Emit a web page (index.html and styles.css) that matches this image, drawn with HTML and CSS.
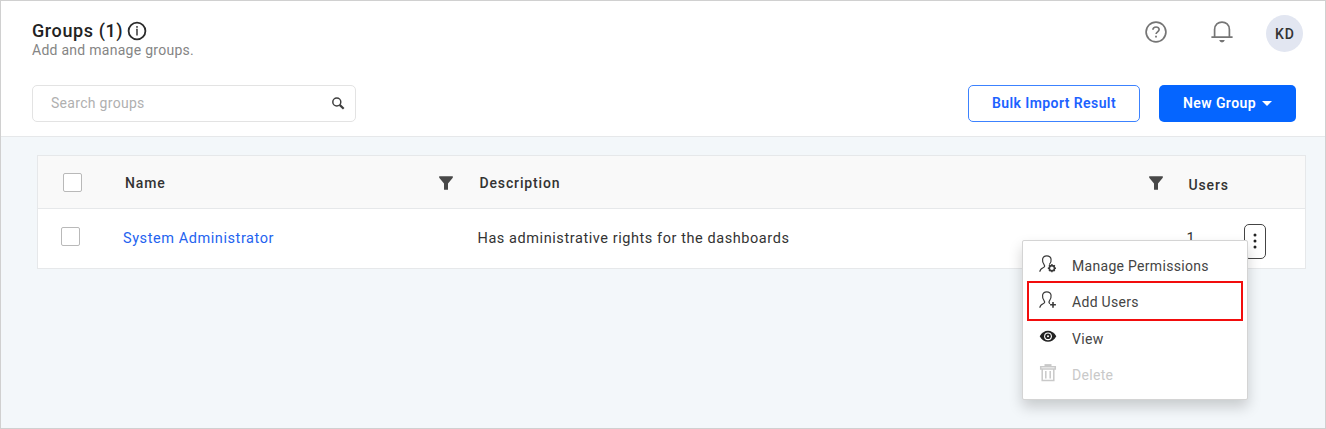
FILE: index.html
```html
<!DOCTYPE html>
<html lang="en">
<head>
<meta charset="utf-8">
<title>Groups</title>
<link rel="stylesheet" href="styles.css">
</head>
<body>
<div class="page">
  <header class="header">
    <div class="topbar">
      <div class="heading">
        <h1 class="title"><span class="title-text">Groups (1)</span>
          <svg class="info" width="20" height="20" viewBox="0 0 20 20"><circle cx="10" cy="10" r="8.4" fill="none" stroke="#2b2b2b" stroke-width="1.8"/><path d="M9.200 8.500H10v6" fill="none" stroke="#2b2b2b" stroke-width="1.400"/><circle cx="10" cy="5.900" r=".9" fill="#2b2b2b"/></svg>
        </h1>
        <p class="subtitle">Add and manage groups.</p>
      </div>
      <div class="tools">
        <svg class="help" width="22" height="22" viewBox="0 0 22 22" fill="none" stroke="#757575" stroke-width="1.700"><circle cx="11" cy="11" r="9.900"/><path d="M7.900 8.800c.2-3.800 6.300-3.600 6.200-.2 0 2.200-3 2.300-3 4.500"/><path d="M10.100 15.600h1.800" stroke-width="1.800"/></svg>
        <svg class="bell" width="22" height="22" viewBox="0 0 22 22" fill="none" stroke="#757575" stroke-width="1.700"><path d="M.4 16.100h21.200M3.600 16V8.600C3.600-1.400 18.400-1.400 18.400 8.600V16"/><path d="M8.200 19h5.600q-.6 2.400-2.800 2.400T8.200 19z" fill="#757575" stroke="none"/></svg>
        <span class="avatar">KD</span>
      </div>
    </div>
    <div class="actions">
      <label class="search"><input class="search-input" type="text" placeholder="Search groups">
        <svg width="14" height="14" viewBox="0 0 14 14" fill="none" stroke="#3f3f3f"><circle cx="5.800" cy="5" r="4" stroke-width="1.500"/><path d="M8.700 7.900l4 3.900" stroke-width="2.200"/></svg>
      </label>
      <div class="buttons">
        <button class="btn btn-outline">Bulk Import Result</button>
        <button class="btn btn-primary">New Group<span class="caret"></span></button>
      </div>
    </div>
  </header>
  <main class="content">
    <div class="table">
      <div class="row row-head">
        <span class="cell check"><span class="box"></span></span>
        <span class="cell name">Name</span>
        <span class="cell filter"><svg width="14" height="14" viewBox="0 0 14 14"><path d="M.2.300h13.600v1.500L9 7.600v6.100H5V7.600L.2 1.800z" fill="#484848"/></svg></span>
        <span class="cell desc">Description</span>
        <span class="cell filter"><svg width="14" height="14" viewBox="0 0 14 14"><path d="M.2.300h13.600v1.500L9 7.600v6.100H5V7.600L.2 1.800z" fill="#484848"/></svg></span>
        <span class="cell users">Users</span>
      </div>
      <div class="row row-body">
        <span class="cell check"><span class="box"></span></span>
        <a class="cell name">System Administrator</a>
        <span class="cell"></span>
        <span class="cell desc">Has administrative rights for the dashboards</span>
        <span class="cell"></span>
        <span class="cell users">1</span>
        <span class="cell more"><button class="more-btn"><svg width="4" height="16" viewBox="0 0 4 16" fill="#222"><circle cx="2" cy="2" r="1.500"/><circle cx="2" cy="8" r="1.500"/><circle cx="2" cy="14" r="1.500"/></svg></button></span>
      </div>
    </div>
  </main>
  <div class="menu">
    <div class="item item-first">
      <svg width="18" height="18" viewBox="0 0 18 18" fill="none" stroke="#3a3a3a" stroke-width="1.200"><path d="M.8 16.800c.3-2.400 1.400-3.400 3.300-4.100 1.600-.6 1.900-1.500 1.200-2.600C2.600 6.600 2.600.900 7.800.900s5.300 5.700 2.500 8.800"/><circle cx="12.900" cy="13.200" r="2.600" stroke-width="1.600"/><path d="M12.900 9.100v1.500M12.900 15.800v1.500M8.800 13.200h1.500M15.500 13.200H17M10 10.300l1 1M14.800 15.100l1 1M10 16.100l1-1M14.800 11.300l1-1" stroke-width="1.400"/></svg>
      <span>Manage Permissions</span>
    </div>
    <div class="item item-active">
      <svg width="18" height="18" viewBox="0 0 18 18" fill="none" stroke="#3a3a3a" stroke-width="1.200"><path d="M.8 16.800c.3-2.400 1.400-3.400 3.300-4.100 1.600-.6 1.900-1.500 1.200-2.600C2.600 6.600 2.600.900 7.800.900s5.300 5.700 2.500 9.200c-.6 1-.3 2 .7 2.500"/><path d="M14 10.900v5.800M11.100 13.800h5.800" stroke-width="1.600"/></svg>
      <span>Add Users</span>
    </div>
    <div class="item">
      <svg width="18" height="18" viewBox="0 0 18 18"><path d="M.7 8.300C4.700.900 13.300.900 17.300 8.300 13.300 15.700 4.700 15.700.7 8.300z" fill="#222"/><circle cx="9" cy="8.300" r="3.900" fill="#fff"/><circle cx="9" cy="8.300" r="2.800" fill="#222"/><circle cx="9" cy="8.300" r="1" fill="#fff"/></svg>
      <span>View</span>
    </div>
    <div class="item item-disabled">
      <svg width="18" height="18" viewBox="0 0 18 18" fill="none" stroke="#c9c9c9" stroke-width="1.500"><path d="M1.700 2.800h14.600V5H1.700zM3.200 5v11.600h11.600V5M6.800 7v7.600M11.200 7v7.600"/><path d="M5.500 1.200h7" stroke-width="2.200"/></svg>
      <span>Delete</span>
    </div>
  </div>
</div>
</body>
</html>
```
FILE: styles.css
```css
* { box-sizing: border-box; }
body { margin: 0; font-family: Roboto, "Liberation Sans", sans-serif; color: #333; }
.page { position: relative; display: flex; flex-direction: column; width: 1326px; height: 429px; border: 1px solid #d0d0d0; background: #f3f7fa; overflow: hidden; }
.header { height: 136px; padding: 0 29px 0 31px; background: #fff; border-bottom: 1px solid #e6e8ea; }
.topbar { display: flex; justify-content: space-between; height: 84px; }
.heading { padding-top: 18px; }
.title { display: flex; align-items: center; gap: 4px; height: 23px; margin: 0; font-size: 18px; font-weight: 500; color: #222; }
.title-text { letter-spacing: .6px; }
.subtitle { margin: 0; font-size: 14px; line-height: 16px; letter-spacing: .27px; color: #858585; }
.tools { display: flex; align-items: center; height: 37px; margin: 14px -7px 0 0; }
.help { margin: 0 44px 3px 0; }
.bell { margin: 0 33px 3px 0; }
.avatar { width: 37px; height: 37px; border-radius: 50%; background: #e2e6f1; font-size: 14px; font-weight: 500; line-height: 38px; letter-spacing: 1px; text-align: center; text-indent: 1px; }
.actions { display: flex; justify-content: space-between; }
.search { display: flex; align-items: center; width: 324px; height: 37px; padding: 0 10px 0 18px; border: 1px solid #e3e3e3; border-radius: 5px; }
.search-input { flex: 1; min-width: 0; padding: 0 0 1px; border: 0; outline: 0; font: 14px Roboto, sans-serif; letter-spacing: .3px; }
.search-input::placeholder { color: #b0b0b0; }
.buttons { display: flex; gap: 19px; }
.btn { display: flex; align-items: center; justify-content: center; height: 37px; padding: 0 0 1px; border-radius: 5px; font: 600 14px Roboto, sans-serif; letter-spacing: .42px; }
.btn-outline { width: 172px; background: #fff; border: 1px solid #3c82ff; color: #1c62ff; }
.btn-primary { width: 137px; background: #0565ff; border: 0; color: #fff; }
.caret { margin: 1px 0 0 6px; border: 5px solid transparent; border-top-color: #fff; border-bottom: 0; }
.content { padding: 18px 19px 0 36px; }
.table { height: 114px; border: 1px solid #e6e8ea; background: #fff; }
.row { display: grid; grid-template-columns: 87px 313.500px 41px 669px 40px 55px 1fr; align-items: center; font-size: 14.500px; }
.row-head { height: 53px; padding-top: 1px; border-bottom: 1px solid #e6e8ea; background: #f9f9f9; font-size: 14px; font-weight: 500; letter-spacing: .86px; }
.row-body { height: 59px; letter-spacing: .57px; }
.check { padding-left: 25px; }
.box { display: block; width: 19px; height: 19px; border: 1px solid #b9b9b9; border-radius: 2px; background: #fff; }
.row-head .check { padding-bottom: 1px; }
.row-head .filter svg { display: block; }
.row-head .users { padding-top: 4px; }
.row-body .check { padding: 0 0 4px 23px; }
.row-body .name { margin-left: -2px; color: #2463ef; }
.row-body .desc, .row-body .users { margin-left: -2px; }
.more { padding-top: 5px; }
.more-btn { display: flex; align-items: center; justify-content: center; width: 22px; height: 35px; padding: 0; border: 1px solid #444; border-radius: 5px; background: #fff; }
.menu { position: absolute; left: 1021px; top: 239px; width: 226px; height: 160px; padding: 4px 4px 0; border: 1px solid #d4d4d4; border-radius: 2px; background: #fff; box-shadow: 0 7px 14px rgba(0, 0, 0, .18); }
.item { display: flex; align-items: center; gap: 15px; height: 36px; padding-left: 12px; font-size: 14px; letter-spacing: .3px; color: #444; }
.item svg { margin-bottom: 4px; }
.item-first { padding-top: 6px; }
.item-active { height: 40px; padding: 2px 0 0 10px; border: 2px solid #f20d0d; }
.item-disabled { color: #c9c9c9; }
```
